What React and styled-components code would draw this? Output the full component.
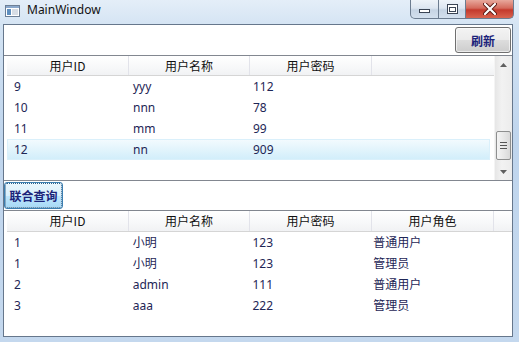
import styled, { createGlobalStyle } from "styled-components";

const GlobalStyle = createGlobalStyle`
  html, body {
    margin: 0;
    padding: 0;
  }
  body {
    width: 519px;
    height: 342px;
    overflow: hidden;
    font-family: "Noto Sans", "Noto Sans CJK SC", sans-serif;
    font-size: 12px;
  }
`;

const Window = styled.div`
  width: 519px;
  height: 342px;
  display: flex;
  flex-direction: column;
  background: linear-gradient(180deg, #e4eef8 0%, #d3e3f3 8%, #bfd5ed 40%, #c4d8ee 100%);
`;

const TitleBar = styled.div`
  height: 24px;
  display: flex;
  align-items: flex-start;
  flex-shrink: 0;
`;

const AppIcon = styled.svg`
  margin: 5px 0 0 5px;
`;

const Title = styled.div`
  margin: 2px 0 0 7px;
  font-size: 12px;
  line-height: 16px;
  color: #111;
  flex: 1;
`;

const Captions = styled.div`
  display: flex;
  margin-right: 5px;
`;

const CaptionButton = styled.div`
  height: 18px;
  width: ${(p) => p.$w}px;
  display: flex;
  align-items: center;
  justify-content: center;
  border: 1px solid #6c7c90;
  border-top: none;
  border-left: ${(p) => (p.$first ? "1px solid #6c7c90" : "none")};
  border-radius: ${(p) =>
    p.$first ? "0 0 0 5px" : p.$last ? "0 0 5px 0" : "0"};
  background: ${(p) =>
    p.$close
      ? "linear-gradient(180deg, #e8a89c 0%, #d46a5c 45%, #c4392c 55%, #d9644f 100%)"
      : "linear-gradient(180deg, #eef3f9 0%, #dde6f1 45%, #c6d4e4 55%, #d3e0ee 100%)"};
`;

const Client = styled.div`
  flex: 1;
  margin: 0 6px 5px 3px;
  border: 1px solid #66778c;
  background: #fff;
  display: flex;
  flex-direction: column;
  min-height: 0;
`;

const Toolbar = styled.div`
  height: 30px;
  display: flex;
  justify-content: flex-end;
  align-items: flex-start;
  padding: 2px 1px 0 0;
  box-sizing: border-box;
`;

const Button = styled.button`
  height: ${(p) => p.$h}px;
  width: ${(p) => p.$w}px;
  padding: 0;
  font-family: "Noto Sans CJK SC", sans-serif;
  font-size: 12px;
  font-weight: bold;
  color: #1b237a;
  border-radius: 3px;
  border: 1px solid ${(p) => (p.$focused ? "#3c7fb1" : "#707070")};
  background: ${(p) =>
    p.$focused
      ? "linear-gradient(180deg, #eaf6fd 0%, #d9f0fc 50%, #bee6fd 51%, #a7d9f5 100%)"
      : "linear-gradient(180deg, #f3f3f3 0%, #ebebeb 50%, #dddddd 51%, #cdcdcd 100%)"};
  box-shadow: inset 0 0 0 1px rgba(255, 255, 255, 0.6);
  outline: ${(p) => (p.$focused ? "1px dotted #2b5f8a" : "none")};
  outline-offset: -2px;
`;

const Grid = styled.div`
  display: flex;
  border-top: 1px solid #828790;
  border-bottom: ${(p) => (p.$bottom ? "1px solid #828790" : "none")};
  height: ${(p) => (p.$h ? `${p.$h}px` : "auto")};
  flex: ${(p) => (p.$h ? "none" : 1)};
  box-sizing: border-box;
`;

const GridBody = styled.div`
  flex: 1;
  padding-left: 3px;
`;

const HeaderRow = styled.div`
  display: flex;
  height: ${(p) => p.$h}px;
  border-bottom: 1px solid #d5d5d5;
  background: linear-gradient(180deg, #ffffff 0%, #f7f8f9 60%, #f1f2f4 100%);
`;

const HeaderCell = styled.div`
  width: ${(p) => p.$w}px;
  flex: ${(p) => (p.$fill ? 1 : "none")};
  border-right: ${(p) => (p.$fill ? "none" : "1px solid #e2e3ea")};
  text-align: center;
  line-height: ${(p) => p.$h}px;
  color: #111;
  font-family: "Noto Sans CJK SC", sans-serif;
  font-size: 12px;
`;

const Row = styled.div`
  display: flex;
  height: 21px;
  width: 483px;
  box-sizing: border-box;
  border: 1px solid ${(p) => (p.$selected ? "#daf0fb" : "transparent")};
  background: ${(p) =>
    p.$selected
      ? "linear-gradient(180deg, #f2fafe 0%, #e2f4fc 50%, #d2eefb 100%)"
      : "transparent"};
`;

const Cell = styled.div`
  width: ${(p) => p.$w}px;
  padding-left: ${(p) => p.$pad}px;
  box-sizing: border-box;
  line-height: 19px;
  color: #1e2656;
  font-family: "Noto Sans", "Noto Sans CJK SC", sans-serif;
  font-size: 12px;
  white-space: nowrap;
`;

const ScrollBar = styled.div`
  width: 17px;
  display: flex;
  flex-direction: column;
  background: linear-gradient(90deg, #e6e6e6 0%, #f2f2f2 40%, #ececec 100%);
  border-left: 1px solid #f4f4f4;
`;

const Arrow = styled.div`
  height: 17px;
  display: flex;
  align-items: center;
  justify-content: center;
`;

const Track = styled.div`
  flex: 1;
  display: flex;
  flex-direction: column;
  justify-content: flex-end;
  padding-bottom: 3px;
`;

const Thumb = styled.div`
  height: 27px;
  margin: 0 1px 0 1px;
  border: 1px solid #8e8f8f;
  border-radius: 2px;
  background: linear-gradient(90deg, #f4f4f4 0%, #e8e8e8 50%, #d9d9d9 100%);
  display: flex;
  align-items: center;
  justify-content: center;
`;

const ButtonRow = styled.div`
  height: 29px;
  padding-top: 1px;
  box-sizing: border-box;
`;

const columns = [121, 120, 121, 121];

const users = [
  ["9", "yyy", "112"],
  ["10", "nnn", "78"],
  ["11", "mm", "99"],
  ["12", "nn", "909"],
];

const joined = [
  ["1", "小明", "123", "普通用户"],
  ["1", "小明", "123", "管理员"],
  ["2", "admin", "111", "普通用户"],
  ["3", "aaa", "222", "管理员"],
];

const Header = ({ titles, h }) => (
  <HeaderRow $h={h}>
    {titles.map((t, i) => (
      <HeaderCell key={i} $w={columns[i]} $h={h}>
        {t}
      </HeaderCell>
    ))}
    <HeaderCell $fill $h={h} />
  </HeaderRow>
);

const Rows = ({ data, selected }) =>
  data.map((r, i) => (
    <Row key={i} $selected={i === selected}>
      {r.map((c, j) => (
        <Cell key={j} $w={j === 0 ? columns[j] - 1 : columns[j]} $pad={j === 0 ? 6 : 5}>
          {c}
        </Cell>
      ))}
    </Row>
  ));

const App = () => {
  return (
    <Window>
      <GlobalStyle />
      <TitleBar>
        <AppIcon width="15" height="12" viewBox="0 0 15 12">
          <rect x="0.5" y="0.5" width="14" height="11" fill="#fff" stroke="#6d7f96" />
          <rect x="1" y="1" width="13" height="2" fill="#8aa8cc" />
          <rect x="2" y="4" width="4" height="6" fill="#5f8fbf" />
          <rect x="7" y="4" width="6" height="6" fill="#d7dde5" />
        </AppIcon>
        <Title>MainWindow</Title>
        <Captions>
          <CaptionButton $w={27} $first>
            <svg width="11" height="9" viewBox="0 0 11 9">
              <rect x="0.5" y="4.5" width="10" height="3" fill="#fff" stroke="#3a4454" />
            </svg>
          </CaptionButton>
          <CaptionButton $w={26}>
            <svg width="11" height="10" viewBox="0 0 11 10">
              <rect x="0.5" y="0.5" width="10" height="9" fill="#fff" stroke="#3a4454" />
              <rect x="2.5" y="3.5" width="6" height="4" fill="none" stroke="#3a4454" />
            </svg>
          </CaptionButton>
          <CaptionButton $w={47} $close $last>
            <svg width="14" height="12" viewBox="0 0 14 12">
              <path d="M2 1 L12 11 M12 1 L2 11" stroke="#5a1a14" strokeWidth="4" strokeLinecap="round" />
              <path d="M2 1 L12 11 M12 1 L2 11" stroke="#fff" strokeWidth="2.2" strokeLinecap="round" />
            </svg>
          </CaptionButton>
        </Captions>
      </TitleBar>
      <Client>
        <Toolbar>
          <Button $w={56} $h={26}>刷新</Button>
        </Toolbar>
        <Grid $h={126} $bottom>
          <GridBody>
            <Header titles={["用户ID", "用户名称", "用户密码"]} h={19} />
            <Rows data={users} selected={3} />
          </GridBody>
          <ScrollBar>
            <Arrow>
              <svg width="7" height="4" viewBox="0 0 7 4">
                <path d="M0 4 L3.5 0 L7 4 Z" fill="#606060" />
              </svg>
            </Arrow>
            <Track>
              <Thumb>
                <svg width="7" height="7" viewBox="0 0 7 7">
                  <path d="M0 0.5 H7 M0 3.5 H7 M0 6.5 H7" stroke="#555" strokeWidth="1" />
                </svg>
              </Thumb>
            </Track>
            <Arrow>
              <svg width="7" height="4" viewBox="0 0 7 4">
                <path d="M0 0 L7 0 L3.5 4 Z" fill="#606060" />
              </svg>
            </Arrow>
          </ScrollBar>
        </Grid>
        <ButtonRow>
          <Button $w={59} $h={27} $focused>联合查询</Button>
        </ButtonRow>
        <Grid>
          <GridBody>
            <Header titles={["用户ID", "用户名称", "用户密码", "用户角色"]} h={20} />
            <Rows data={joined} selected={-1} />
          </GridBody>
        </Grid>
      </Client>
    </Window>
  );
};

export default App;
